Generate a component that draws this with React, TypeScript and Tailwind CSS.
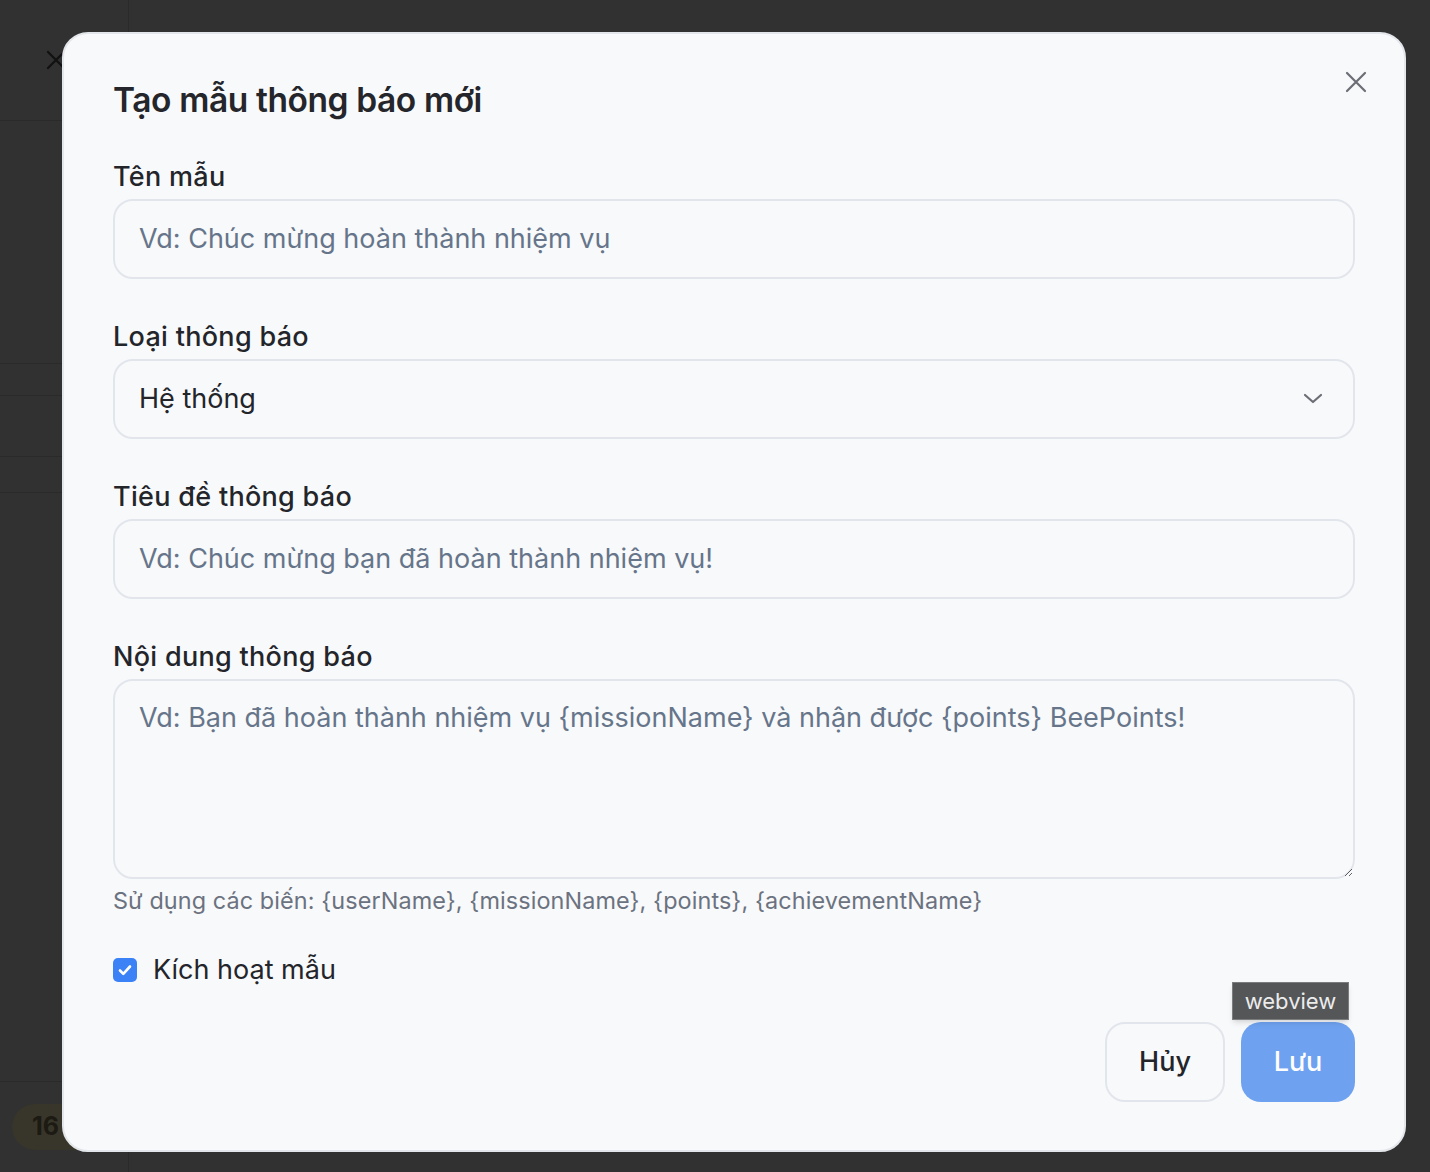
import React from "react";

function Field({ label, children }: { label: string; children: React.ReactNode }) {
  return (
    <div className="flex flex-col gap-[4px]">
      <div className="text-[27px] leading-[36px] font-medium text-[#23252b] tracking-[0.3px]">{label}</div>
      {children}
    </div>
  );
}

export default function App() {
  return (
    <div
      className="relative w-[1430px] h-[1172px] overflow-hidden bg-[#313131]"
      style={{ fontFamily: "Inter, 'Noto Sans', 'Liberation Sans', sans-serif" }}
    >
      {/* background page (dimmed) */}
      <div className="flex h-full">
        <div className="w-[129px] h-full border-r border-[#2a2a2a] flex flex-col">
          <div className="h-[121px] border-b border-[#2a2a2a] flex items-center pl-[46px]">
            <svg width="20" height="20" viewBox="0 0 20 20" fill="none" stroke="#111" strokeWidth="2.2" strokeLinecap="round">
              <path d="M2 2L18 18M18 2L2 18" />
            </svg>
          </div>
          <div className="h-[243px] border-b border-[#2a2a2a]" />
          <div className="h-[32px] border-b border-[#2a2a2a]" />
          <div className="h-[61px] border-b border-[#2a2a2a]" />
          <div className="h-[36px] border-b border-[#2a2a2a]" />
          <div className="h-[589px] border-b border-[#2a2a2a]" />
          <div className="flex-1 flex items-center pl-[12px]">
            <div className="h-[46px] w-[92px] rounded-full bg-[#38362a] flex items-center pl-[20px] text-[25px] font-bold text-[#1c1a12]">
              16
            </div>
          </div>
        </div>
        <div className="flex-1" />
      </div>

      {/* modal */}
      <div className="absolute left-[62px] top-[32px] w-[1344px] h-[1120px] rounded-[26px] bg-[#f8f9fa] border-2 border-[#e3e6ea] px-[49px] pt-[44px] pb-[48px] flex flex-col">
        <button className="absolute right-[36px] top-[36px] w-[24px] h-[24px] flex items-center justify-center">
          <svg width="22" height="22" viewBox="0 0 22 22" fill="none" stroke="#6b6e75" strokeWidth="2.2" strokeLinecap="round">
            <path d="M2 2L20 20M20 2L2 20" />
          </svg>
        </button>
        <h2 className="text-[33.5px] leading-[44px] font-semibold text-[#25262b] tracking-[-0.4px]">Tạo mẫu thông báo mới</h2>

        <div className="mt-[37px] flex flex-col gap-[40px]">
          <Field label="Tên mẫu">
            <div className="h-[80px] rounded-[20px] border-2 border-[#e2e6ec] flex items-center px-[24px] text-[27px] text-[#66758a]">
              Vd: Chúc mừng hoàn thành nhiệm vụ
            </div>
          </Field>
          <Field label="Loại thông báo">
            <div className="h-[80px] rounded-[20px] border-2 border-[#e2e6ec] flex items-center justify-between pl-[24px] pr-[28px] text-[27px] text-[#23252b]">
              <span>Hệ thống</span>
              <svg width="24" height="24" viewBox="0 0 24 24" fill="none" stroke="#6b6e75" strokeWidth="2.2" strokeLinecap="round" strokeLinejoin="round">
                <path d="M4 8l8 7 8-7" />
              </svg>
            </div>
          </Field>
          <Field label="Tiêu đề thông báo">
            <div className="h-[80px] rounded-[20px] border-2 border-[#e2e6ec] flex items-center px-[24px] text-[27px] text-[#66758a]">
              Vd: Chúc mừng bạn đã hoàn thành nhiệm vụ!
            </div>
          </Field>
          <div className="flex flex-col">
            <Field label="Nội dung thông báo">
              <textarea
                className="h-[200px] w-full rounded-[20px] border-2 border-[#e2e6ec] bg-transparent px-[24px] pt-[19px] text-[27px] leading-[36px] text-[#23252b] placeholder:text-[#66758a] outline-none"
                placeholder="Vd: Bạn đã hoàn thành nhiệm vụ {missionName} và nhận được {points} BeePoints!"
                style={{ fontFamily: "Inter, 'Noto Sans', 'Liberation Sans', sans-serif" }}
              />
            </Field>
            <div className="mt-[7px] text-[23.4px] leading-[30px] text-[#6b7280] tracking-[0.1px]">
              Sử dụng các biến: {"{userName}"}, {"{missionName}"}, {"{points}"}, {"{achievementName}"}
            </div>
            <div className="mt-[36px] flex items-center gap-[16px] h-[36px]">
              <div className="w-[24px] h-[24px] rounded-[5px] bg-[#3b82f6] flex items-center justify-center">
                <svg width="16" height="16" viewBox="0 0 16 16" fill="none" stroke="#fff" strokeWidth="2.6" strokeLinecap="round" strokeLinejoin="round">
                  <path d="M3 8.5l3.3 3.3L13 4.5" />
                </svg>
              </div>
              <span className="text-[27px] text-[#23252b]">Kích hoạt mẫu</span>
            </div>
          </div>
        </div>

        <div className="mt-auto flex justify-end gap-[16px]">
          <button className="h-[80px] w-[120px] rounded-[20px] border-2 border-[#e2e6ec] text-[27px] font-medium text-[#23252b]">
            Hủy
          </button>
          <div className="relative">
            <button className="h-[80px] w-[114px] rounded-[20px] bg-[#6ea2f0] text-[27px] font-medium text-white">
              Lưu
            </button>
            <div className="absolute left-[-9px] top-[-40px] h-[38px] w-[117px] bg-[#545658] border border-[#7a7c7e] shadow-md flex items-center justify-center text-[22px] text-[#ececec]">
              webview
            </div>
          </div>
        </div>
      </div>
    </div>
  );
}
